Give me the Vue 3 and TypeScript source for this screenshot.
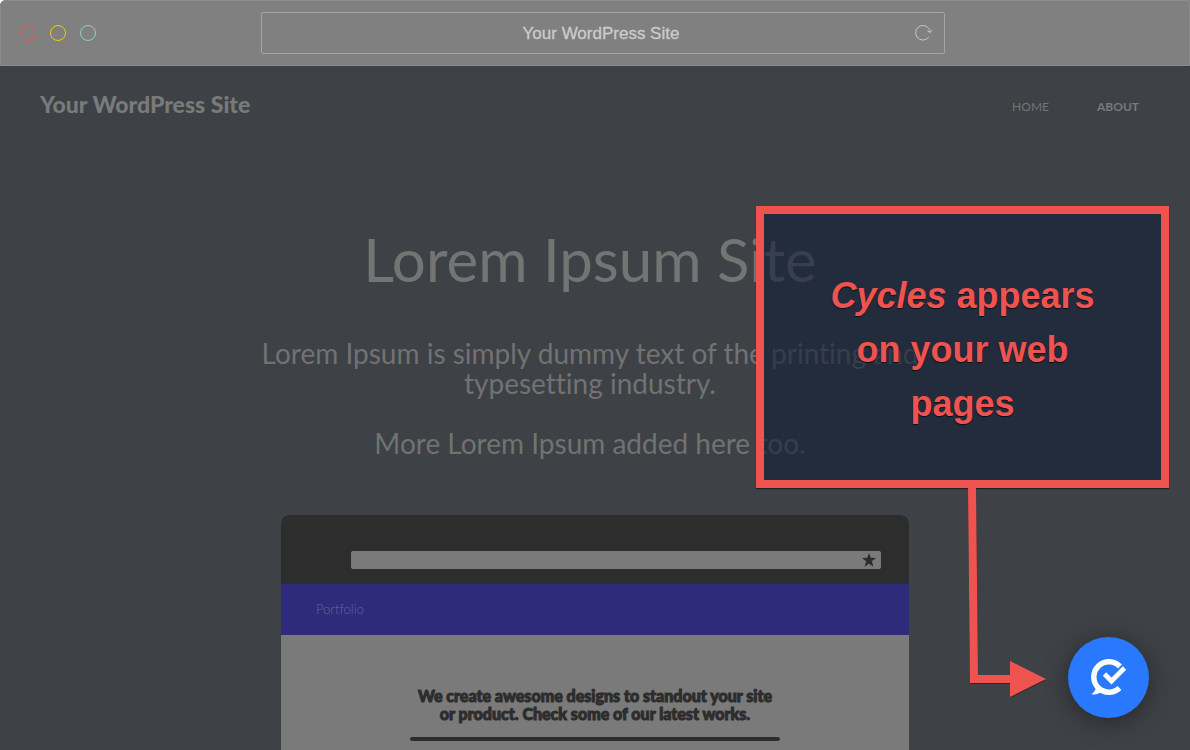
<script setup lang="ts">
import { ref } from 'vue'

interface NavItem {
  label: string
  href: string
  current: boolean
}

const siteName = 'Your WordPress Site'
const address = ref<string>(siteName)
const previewAddress = ref<string>('')
const nav: NavItem[] = [
  { label: 'HOME', href: '#home', current: false },
  { label: 'ABOUT', href: '#about', current: true },
]
const lights: string[] = ['close', 'minimise', 'expand']
</script>

<template>
  <div class="window">
    <header class="chrome">
      <div class="lights">
        <button v-for="name in lights" :key="name" type="button" :class="['light', name]" :aria-label="name"></button>
      </div>
      <div class="address">
        <input v-model="address" type="text" aria-label="Address" />
        <button type="button" class="reload" aria-label="Reload">
          <svg width="20" height="18" viewBox="0 0 20 18" fill="none" stroke="currentColor">
            <path d="M14.7 13.2A7.3 7.3 0 1 1 16.2 8.4" />
            <path d="M13.4 6.8l2.8 1.8 2-2.4" />
          </svg>
        </button>
      </div>
    </header>

    <div class="page">
      <div class="topbar">
        <a class="brand" href="#home">{{ siteName }}</a>
        <nav class="nav">
          <a v-for="item in nav" :key="item.label" :href="item.href" :class="{ current: item.current }">{{ item.label }}</a>
        </nav>
      </div>

      <main class="hero">
        <h1>Lorem Ipsum Site</h1>
        <p>Lorem Ipsum is simply dummy text of the printing and<br />typesetting industry.</p>
        <p>More Lorem Ipsum added here too.</p>
      </main>

      <section class="preview">
        <div class="preview-chrome">
          <div class="preview-address">
            <input v-model="previewAddress" type="text" aria-label="Preview address" />
            <button type="button" aria-label="Bookmark">
              <svg width="14" height="14" viewBox="0 0 14 14" fill="currentColor">
                <path d="M7 0l1.800 4.700 5.200.3-4.100 3.200 1.600 5.500L7 10.800l-4.500 2.900L4.100 8.200 0 5l5.200-.3z" />
              </svg>
            </button>
          </div>
        </div>
        <div class="preview-nav">Portfolio</div>
        <div class="preview-body">
          <h2>We create awesome designs to standout your site<br />or product. Check some of our latest works.</h2>
          <hr />
        </div>
      </section>
    </div>

    <aside class="callout"><p><em>Cycles</em> appears<br />on your web<br />pages</p></aside>
    <svg class="arrow" width="80" height="212" viewBox="0 0 80 212" aria-hidden="true">
      <path d="M2 0H10L12 187H44V173L80 191L44 209V195H4Z" fill="#ef5350" />
    </svg>
    <button type="button" class="widget" aria-label="Open Cycles">
      <svg width="41" height="41" viewBox="0 0 41 41" fill="none" stroke="#fbfbfb">
        <path d="M32 9.500A15.200 15.200 0 1 0 31.500 31" stroke-width="5.500" />
        <path d="M16.500 17L23.500 24L36.500 11" stroke-width="4.800" />
        <path d="M8 28C8.500 32 7 34.500 3.500 37.200C8 38 12.500 36.500 15 33Z" fill="#fbfbfb" stroke="none" />
      </svg>
    </button>
  </div>
</template>

<style>
body {
  background: #fff;
}
</style>

<style scoped>
.window {
  position: relative;
  display: flex;
  flex-direction: column;
  height: 100vh;
  overflow: hidden;
  border-radius: 6px 0 0 0;
  background: #3e4145;
  color: #7a7a7a;
  font-family: Lato, "Open Sans", sans-serif;
  font-variant-ligatures: none;
}
button {
  padding: 0;
  border: 0;
  background: none;
  color: inherit;
}
input {
  min-width: 0;
  padding: 0;
  border: 0;
  outline: 0;
  background: none;
}
a {
  color: inherit;
  text-decoration: none;
}
.chrome {
  display: grid;
  grid-template-columns: 1fr 684px 1fr;
  flex: none;
  align-items: center;
  box-sizing: border-box;
  height: 66px;
  padding: 0 3px 0 19px;
  border: 1px solid #8c8c8c;
  border-radius: 6px 0 0 0;
  background: #808080;
}
.lights {
  display: flex;
  gap: 14px;
}
.light {
  box-sizing: border-box;
  width: 16px;
  height: 16px;
  border: 1px solid;
  border-radius: 50%;
}
.close { border-color: #ef5350; }
.minimise { border-color: #f4c90f; }
.expand { border-color: #8fd0c3; }
.address {
  display: flex;
  align-items: center;
  box-sizing: border-box;
  height: 42px;
  padding: 0 10px 0 26px;
  border: 1px solid #a6a6a6;
  border-radius: 2px;
  color: #cccccc;
}
.address input {
  flex: 1;
  padding-top: 2px;
  color: inherit;
  font: 17px "Liberation Sans", Arial, sans-serif;
  text-align: center;
  -webkit-text-stroke: 0.3px #cccccc;
}
.reload {
  display: flex;
  color: #c6c6c6;
}
.page {
  flex: 1;
  display: flex;
  flex-direction: column;
  min-height: 0;
}
.topbar {
  display: flex;
  flex: none;
  align-items: center;
  justify-content: space-between;
  height: 76px;
  padding: 0 51px 0 40px;
}
.brand {
  font-size: 23px;
  font-weight: 900;
}
.nav {
  display: flex;
  gap: 48px;
  padding-top: 4px;
  font-size: 12px;
  color: #747474;
}
.nav .current {
  color: #7a7a7a;
  font-weight: 700;
}
.hero {
  display: flex;
  flex: none;
  flex-direction: column;
  align-items: center;
  padding: 82px 10px 0 0;
  text-align: center;
}
h1 {
  margin: 0 0 44px;
  color: #747474;
  font-size: 60px;
  font-weight: 400;
  line-height: 70px;
}
.hero p {
  margin: 0 0 30px;
  color: #727272;
  font-size: 28px;
  font-weight: 400;
  line-height: 30px;
}
.preview {
  flex: none;
  align-self: center;
  width: 628px;
  margin-top: 27px;
  overflow: hidden;
  border-radius: 7px 7px 0 0;
  background: #7a7a7a;
}
.preview-chrome {
  padding: 36px 28px 15px 70px;
  background: #2d2d2d;
}
.preview-address {
  display: flex;
  align-items: center;
  height: 18px;
  padding-right: 5px;
  border-radius: 2px;
  background: #7a7a7a;
  color: #2d2d2d;
}
.preview-address input {
  flex: 1;
}
.preview-address button {
  display: flex;
}
.preview-nav {
  padding-left: 35px;
  background: #2d2b7a;
  color: #66669a;
  font-size: 13px;
  font-weight: 300;
  line-height: 50px;
  padding-bottom: 1px;
}
.preview-body {
  padding: 52px 129px 40px;
  text-align: center;
}
h2 {
  margin: 0 0 14px;
  color: #2d2d2d;
  font-size: 16px;
  font-weight: 900;
  line-height: 18px;
  white-space: nowrap;
  -webkit-text-stroke: 1px #2d2d2d;
}
hr {
  height: 4px;
  margin: 0;
  border: 0;
  border-radius: 2px;
  background: #2d2d2d;
}
.callout {
  position: absolute;
  top: 206px;
  right: 21px;
  display: grid;
  place-items: center;
  box-sizing: border-box;
  width: 413px;
  height: 282px;
  padding-top: 6px;
  border: 8px solid #ef5350;
  background: rgba(20, 33, 54, 0.64) padding-box;
  box-shadow: 0 1px 1px rgba(0, 0, 0, 0.5);
  color: #ef5350;
  font-family: "Liberation Sans", Arial, sans-serif;
  font-size: 36px;
  font-weight: 700;
  line-height: 54px;
  text-align: center;
  text-shadow: 0 1px 1px rgba(0, 0, 0, 0.7);
}
.callout p {
  margin: 0;
}
.arrow {
  position: absolute;
  top: 488px;
  right: 144px;
  filter: drop-shadow(0 1px 0 rgba(0, 0, 0, 0.35));
}
.widget {
  position: absolute;
  top: 637px;
  right: 41px;
  display: grid;
  place-items: center;
  width: 81px;
  height: 81px;
  border-radius: 50%;
  background: #2979ff;
  box-shadow: 0 4px 24px rgba(0, 0, 0, 0.38);
}
</style>
